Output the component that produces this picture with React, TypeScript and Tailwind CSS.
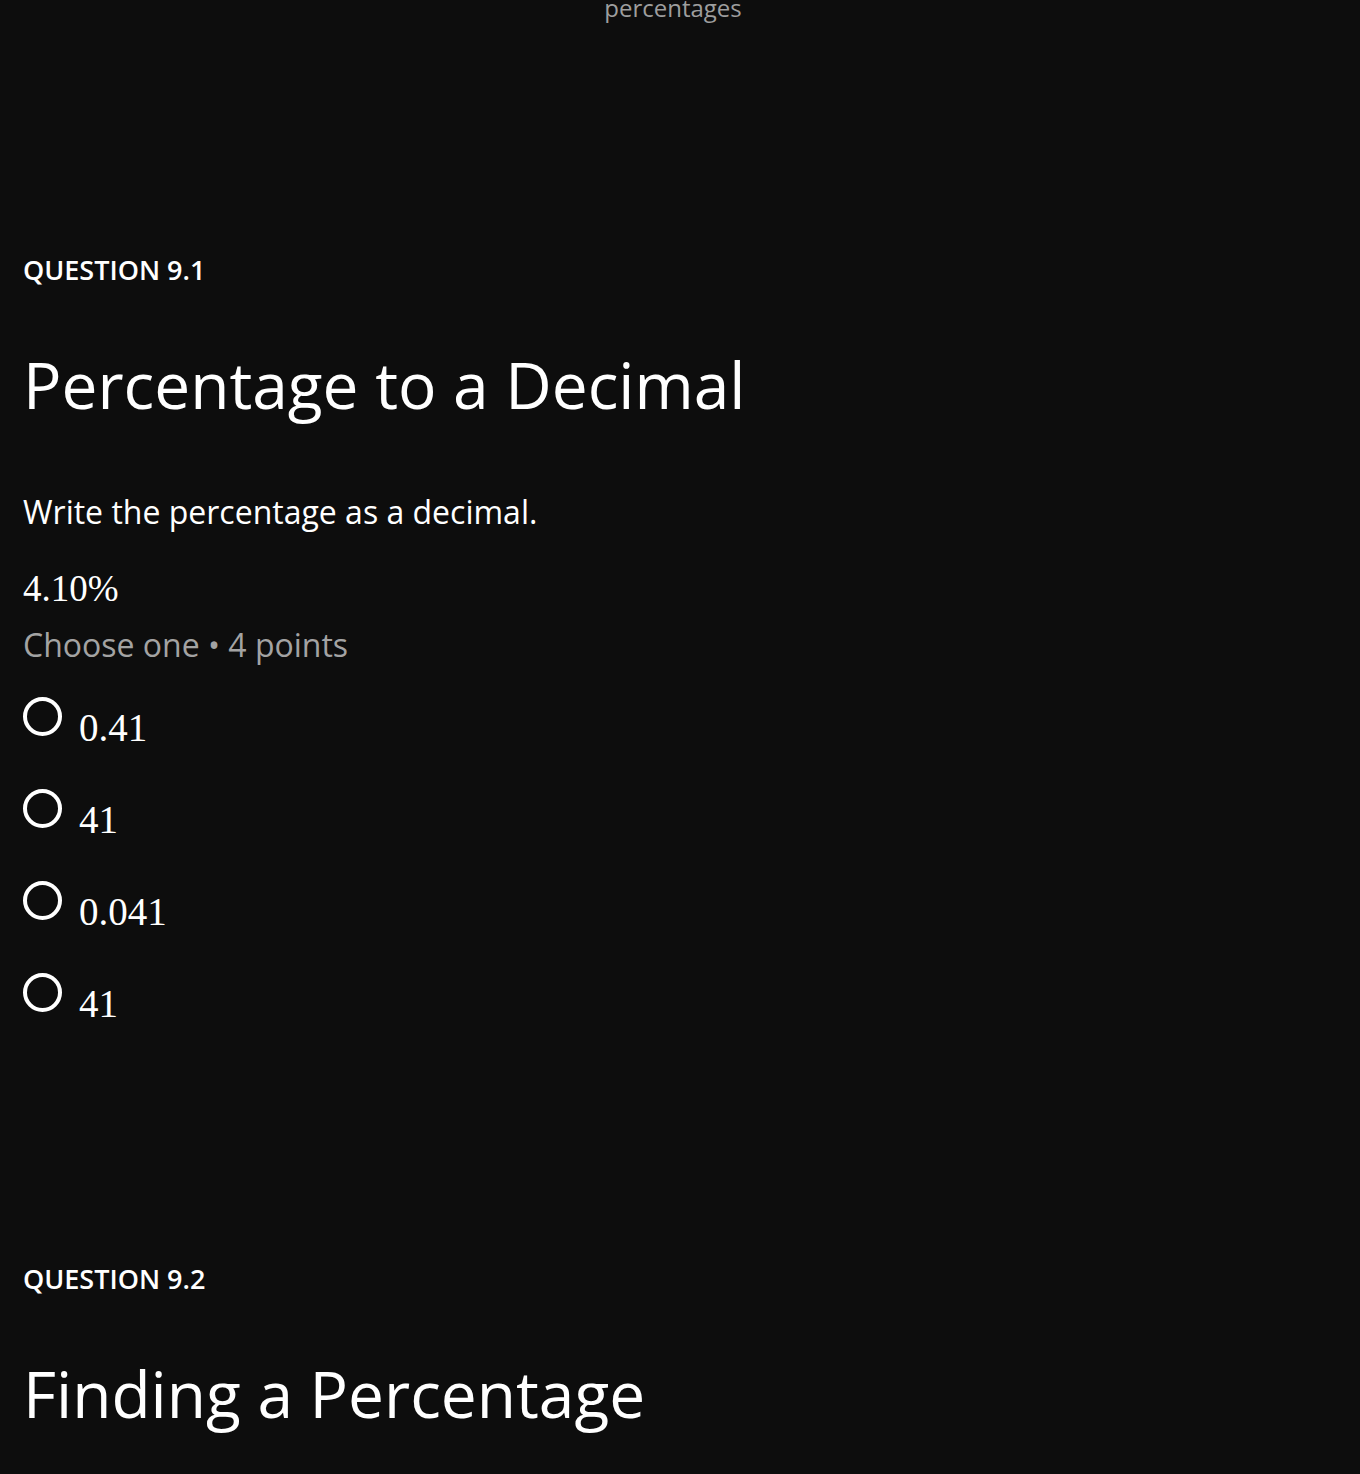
import React from "react";

function Option({ label }: { label: string }) {
  return (
    <div className="flex items-start h-[92px]">
      <div className="w-[39px] h-[39px] rounded-full border-[4px] border-white shrink-0" />
      <div className="ml-[17px] mt-[7px] text-[39px] leading-[48px] text-white font-['Liberation_Serif',serif]">
        {label}
      </div>
    </div>
  );
}

export default function App() {
  return (
    <div className="min-h-[1474px] bg-[#0d0d0d] text-white font-['Open_Sans',sans-serif] overflow-hidden">
      <div className="pr-[14px] text-center text-[24px] leading-[24px] -mt-[4px] text-[#9e9e9e]">percentages</div>
      <div className="px-[23px]">
        <div className="mt-[232px] text-[27px] leading-[36px] font-semibold">QUESTION 9.1</div>
        <h1 className="mt-[57px] text-[64px] leading-[80px] font-normal">Percentage to a Decimal</h1>
        <p className="mt-[67px] text-[32px] leading-[40px]">Write the percentage as a decimal.</p>
        <div className="mt-[35px] text-[37px] leading-[44px] font-['Liberation_Serif',serif]">4.10%</div>
        <div className="mt-[14px] text-[32px] leading-[40px] text-[#a3a3a3]">Choose one • 4 points</div>
        <div className="mt-[32px]">
          <Option label="0.41" />
          <Option label="41" />
          <Option label="0.041" />
          <Option label="41" />
        </div>
        <div className="mt-[196px] text-[27px] leading-[36px] font-semibold">QUESTION 9.2</div>
        <h1 className="mt-[57px] text-[64px] leading-[80px] font-normal">Finding a Percentage</h1>
      </div>
    </div>
  );
}
